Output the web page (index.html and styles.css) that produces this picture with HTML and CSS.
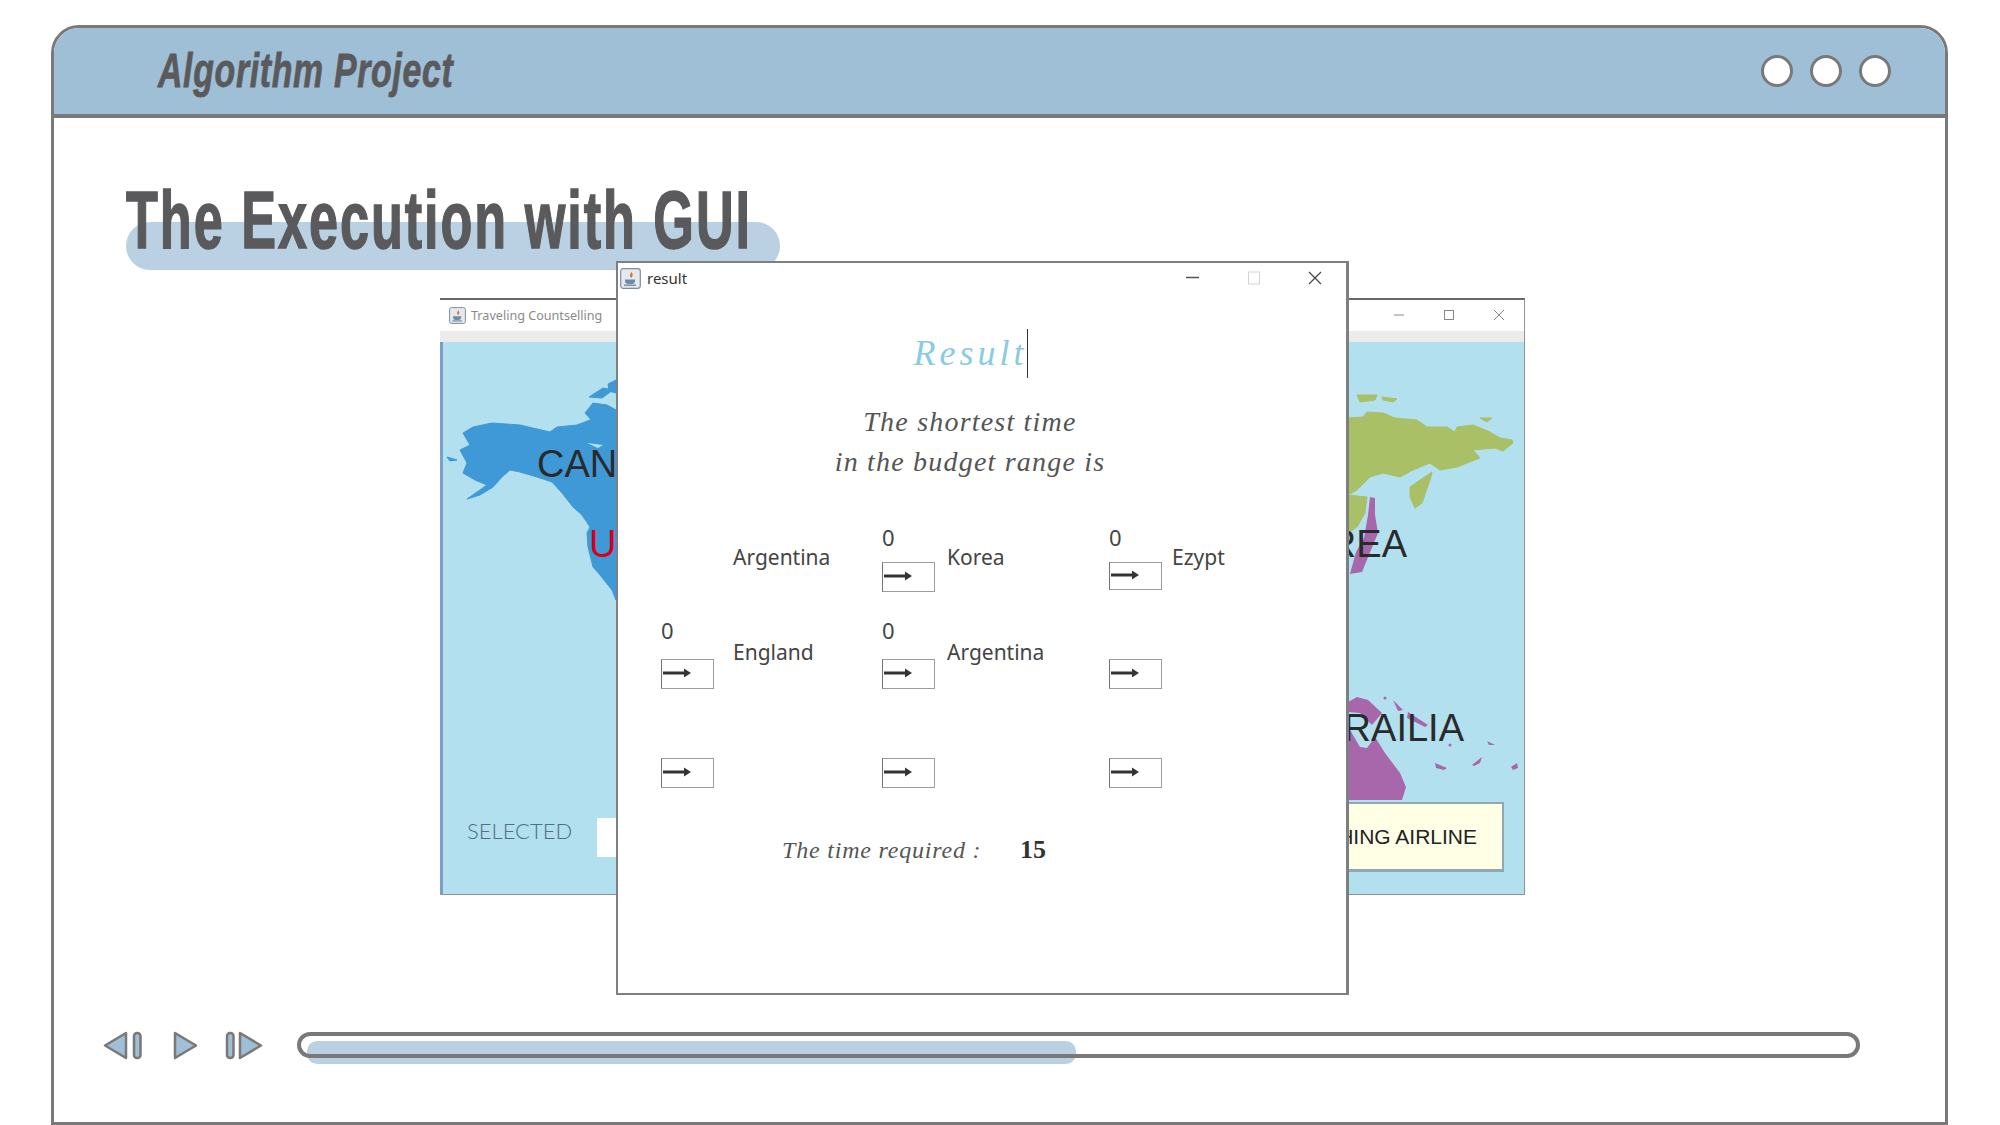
FILE: index.html
```html
<!DOCTYPE html>
<html lang="en">
<head>
  <meta charset="UTF-8" />
  <title>Algorithm Project</title>
  <link rel="stylesheet" href="styles.css">
</head>
<body>
  <svg class="defs" width="0" height="0">
    <symbol id="java" viewBox="0 0 21 21">
      <rect x="0.7" y="0.7" width="19.6" height="19.6" rx="2.5" fill="#e4e9ef" stroke="#7f8c99" stroke-width="1.2"/>
      <path d="M11 3c1.5 2-2 3-.8 5.500 .3 .8 1 1.200 1.500 1.500-.3-1.500 2-2.500 .6-4.500C12 4.500 11.500 4 11 3z" fill="#d9742b"/>
      <path d="M5 11.500h10v1.500c0 2-1.500 3-3 3H8c-1.500 0-3-1-3-3z" fill="#6f8ba5"/>
      <rect x="4" y="16.500" width="12" height="1.400" fill="#6f8ba5"/>
    </symbol>
    <symbol id="arrow" viewBox="0 0 30 12">
      <path d="M0 6h23" stroke="#333" stroke-width="3" fill="none"/>
      <path d="M21 1.500 28 6l-7 4.500z" fill="#333"/>
    </symbol>
  </svg>

  <div class="frame">
    <header class="frame-head">
      <div class="frame-title">Algorithm Project</div>
      <div class="dots">
        <span class="dot"></span>
        <span class="dot"></span>
        <span class="dot"></span>
      </div>
    </header>

    <main class="frame-body">
      <h1 class="slide-title"><span>The Execution with GUI</span></h1>
    </main>

    <footer class="player">
      <div class="player-btns">
        <svg class="icon-prev" width="60" height="31" viewBox="0 0 60 31">
          <path d="M2 15.500 23 3v25z" class="shape"/>
          <rect x="31" y="3" width="6.500" height="25" rx="3" class="shape"/>
        </svg>
        <svg class="icon-play" width="26" height="31" viewBox="0 0 26 31">
          <path d="M2 3l21 12.500L2 28z" class="shape"/>
        </svg>
        <svg class="icon-next" width="40" height="31" viewBox="0 0 40 31">
          <rect x="2" y="3" width="6.500" height="25" rx="3" class="shape"/>
          <path d="M15 3l21 12.500L15 28z" class="shape"/>
        </svg>
      </div>
      <div class="track">
        <div class="track-fill"></div>
        <div class="track-line"></div>
      </div>
    </footer>
  </div>

  <div class="desktop">
    <section class="back-window">
      <div class="back-bar">
        <svg class="java" width="17" height="17"><use href="#java"/></svg>
        <span class="back-name">Traveling Countselling</span>
        <div class="back-ctrls">
          <svg width="12" height="12" viewBox="0 0 12 12"><path d="M1 6h10" stroke="#888"/></svg>
          <svg width="12" height="12" viewBox="0 0 12 12"><rect x="1.500" y="1.500" width="9" height="9" fill="none" stroke="#888"/></svg>
          <svg width="12" height="12" viewBox="0 0 12 12"><path d="M1 1l10 10M11 1 1 11" stroke="#888"/></svg>
        </div>
      </div>
      <div class="back-band"></div>
      <div class="map">
        <svg class="map-art" width="1081" height="552" viewBox="443 342 1081 552">
          <g class="land-blue">
            <path d="M463 433 473 427 492 423 520 425 550 432 557 427 577 425 590 420 616 417V600L612 590 600 575 593 567 588 547 587 533 590 527 582 515 573 507 562 493 552 482 537 477 520 472 510 470 502 477 493 487 480 495 467 499 477 492 487 485 475 480 463 473 467 463 460 450 470 445z"/>
            <path d="M589 397 603 388 613 390 602 398z"/>
            <path d="M585 413 593 403 607 405 616 410V431L603 423 593 422z"/>
            <path d="M447 457 457 460 450 461z"/>
            <path d="M608 384 616 380V393L609 391z"/>
          </g>
          <path d="M587 443 603 445 598 448z" fill="#b2e0ef"/>
          <g class="land-green">
            <path d="M1348 418 1363 417 1367 412 1383 413 1395 418 1417 420 1427 427 1447 427 1455 432 1457 427 1473 425 1490 432 1500 438 1512 440 1513 443 1503 451 1495 448 1473 450 1480 458 1457 467 1440 470 1430 463 1413 470 1400 477 1383 473 1370 477 1357 490 1348 495z"/>
            <path d="M1410 487 1420 480 1432 472 1430 480 1422 503 1415 508 1410 497z"/>
            <path d="M1348 495 1367 497 1365 513 1357 527 1348 533z"/>
            <path d="M1357 395 1377 395 1375 400 1360 402z"/>
            <path d="M1382 397 1397 399 1393 402 1383 400z"/>
            <path d="M1480 418 1492 418 1487 422z"/>
          </g>
          <g class="land-purple">
            <path d="M1370 497 1375 498 1375 515 1378 533 1371 550 1362 572 1350 574 1356 552 1364 538 1368 515z"/>
            <path d="M1348 730 1350 730 1360 747 1367 748 1375 737 1385 753 1400 773 1406 787 1402 800H1348z"/>
            <path d="M1348 702 1357 697 1368 700 1382 713 1372 725 1360 713 1348 712z"/>
            <path d="M1393 700 1403 710 1398 711z"/>
            <path d="M1408 712 1428 725 1425 727 1407 718z"/>
            <path d="M1435 763 1447 768 1444 770 1436 768z"/>
            <path d="M1472 765 1482 757 1480 763 1474 766z"/>
            <path d="M1511 767 1517 763 1518 768 1513 770z"/>
            <path d="M1487 741 1495 745 1489 745z"/>
            <circle cx="1450" cy="745" r="1.500"/>
            <circle cx="1385" cy="698" r="1.500"/>
          </g>
          <text class="map-label" x="537" y="477">CAN</text>
          <text class="map-label map-red" x="589" y="557">U</text>
          <text class="map-label" x="1407" y="557" text-anchor="end">REA</text>
          <text class="map-label" x="1464" y="741" text-anchor="end">RAILIA</text>
        </svg>
        <span class="selected">SELECTED</span>
        <div class="selected-box"></div>
        <div class="airline">HING AIRLINE</div>
      </div>
    </section>

    <section class="front-window">
      <div class="front-bar">
        <svg width="21" height="21"><use href="#java"/></svg>
        <span class="front-name">result</span>
        <div class="front-ctrls">
          <svg width="14" height="14" viewBox="0 0 14 14"><path d="M0 6.500h13" stroke="#555" stroke-width="1.500"/></svg>
          <svg width="14" height="14" viewBox="0 0 14 14"><rect x="1.500" y="1" width="11" height="12" fill="none" stroke="#d4d4d4"/></svg>
          <svg width="14" height="14" viewBox="0 0 14 14"><path d="M1 1l12 12M13 1 1 13" stroke="#444" stroke-width="1.200"/></svg>
        </div>
      </div>

      <div class="front-content">
        <div class="result-head">Result</div>
        <p class="result-sub">The shortest time<br>in the budget range is</p>

        <div class="route">
          <div class="cell">
            <div class="stack"></div>
            <span class="place place-a">Argentina</span>
          </div>
          <div class="cell">
            <div class="stack">
              <span class="count count-a">0</span>
              <div class="arrow-box"><svg width="30" height="12"><use href="#arrow"/></svg></div>
            </div>
            <span class="place place-a place-b">Korea</span>
          </div>
          <div class="cell">
            <div class="stack stack-up">
              <span class="count count-a">0</span>
              <div class="arrow-box"><svg width="30" height="12"><use href="#arrow"/></svg></div>
            </div>
            <span class="place place-a place-c">Ezypt</span>
          </div>

          <div class="cell">
            <div class="stack">
              <span class="count">0</span>
              <div class="arrow-box"><svg width="30" height="12"><use href="#arrow"/></svg></div>
            </div>
            <span class="place place-d">England</span>
          </div>
          <div class="cell">
            <div class="stack">
              <span class="count">0</span>
              <div class="arrow-box"><svg width="30" height="12"><use href="#arrow"/></svg></div>
            </div>
            <span class="place place-d place-b">Argentina</span>
          </div>
          <div class="cell">
            <div class="stack">
              <div class="arrow-box"><svg width="30" height="12"><use href="#arrow"/></svg></div>
            </div>
          </div>

          <div class="cell">
            <div class="stack">
              <div class="arrow-box"><svg width="30" height="12"><use href="#arrow"/></svg></div>
            </div>
          </div>
          <div class="cell">
            <div class="stack">
              <div class="arrow-box"><svg width="30" height="12"><use href="#arrow"/></svg></div>
            </div>
          </div>
          <div class="cell">
            <div class="stack">
              <div class="arrow-box"><svg width="30" height="12"><use href="#arrow"/></svg></div>
            </div>
          </div>
        </div>

        <div class="time-row">
          <span class="time-label">The time required :</span>
          <span class="time-value">15</span>
        </div>
      </div>
    </section>
  </div>
</body>
</html>
```

FILE: styles.css
```css
body {
  margin: 0;
  width: 2000px;
  height: 1125px;
  overflow: hidden;
  position: relative;
  background: #fff;
  font-family: "Noto Sans", sans-serif;
  color: #444;
}

.defs {
  position: absolute;
}

/* big slide frame */
.frame {
  box-sizing: border-box;
  margin: 25px 0 0 51px;
  width: 1897px;
  height: 1100px;
  border: 3px solid #7a7879;
  border-radius: 28px 28px 0 0;
  display: flex;
  flex-direction: column;
}

.frame-head {
  box-sizing: border-box;
  height: 90px;
  flex: none;
  background: #9ebfd6;
  border-bottom: 4px solid #7a7879;
  border-radius: 25px 25px 0 0;
  display: flex;
  align-items: center;
  justify-content: space-between;
  padding: 0 54px 0 104px;
}

.frame-title {
  font-family: "Liberation Sans", sans-serif;
  font-weight: bold;
  font-style: italic;
  font-size: 49px;
  letter-spacing: 1px;
  color: #5a595b;
  -webkit-text-stroke: 0.8px #5a595b;
  transform: scaleX(0.69) translateY(-1px);
  transform-origin: left center;
  white-space: nowrap;
}

.dots {
  display: flex;
  gap: 17px;
}

.dot {
  box-sizing: border-box;
  width: 32px;
  height: 32px;
  border-radius: 50%;
  background: #fff;
  border: 3px solid #7a7879;
}

.frame-body {
  flex: 1;
  padding: 49px 0 0 72px;
}

.slide-title {
  margin: 0;
  width: 654px;
  height: 100px;
  position: relative;
  font-family: "Liberation Sans", sans-serif;
  font-weight: bold;
  font-size: 81px;
  line-height: 92px;
  color: #5a595b;
  white-space: nowrap;
}

.slide-title::before {
  content: "";
  position: absolute;
  left: 0;
  top: 55px;
  width: 654px;
  height: 48px;
  border-radius: 24px;
  background: #b9d1e2;
}

.slide-title span {
  position: relative;
  display: inline-block;
  top: 7px;
  letter-spacing: 3px;
  -webkit-text-stroke: 1.500px #5a595b;
  transform: scaleX(0.645);
  transform-origin: left center;
}

/* player controls */
.player {
  flex: none;
  display: flex;
  align-items: flex-start;
  padding: 0 0 61px 49px;
}

.player-btns {
  display: flex;
  align-items: center;
  width: 194px;
}

.player-btns svg {
  display: block;
  flex: none;
}

.icon-play {
  margin: 0 0 0 10px;
}

.icon-next {
  margin-left: 26px;
}

.shape {
  fill: #9ebfd6;
  stroke: #7a7879;
  stroke-width: 2.500;
  stroke-linejoin: round;
}

.track {
  position: relative;
  width: 1563px;
  height: 31px;
}

.track-line {
  position: absolute;
  left: 0;
  top: 2px;
  box-sizing: border-box;
  width: 1563px;
  height: 26px;
  border: 4px solid #7a7879;
  border-radius: 13px;
}

.track-fill {
  position: absolute;
  left: 10px;
  top: 11px;
  width: 769px;
  height: 23px;
  border-radius: 10px;
  background: #b9d1e2;
}

/* windows on top of the slide */
.desktop {
  position: absolute;
  left: 0;
  top: 0;
}

.back-window {
  position: absolute;
  left: 440px;
  top: 298px;
  box-sizing: border-box;
  width: 1085px;
  height: 597px;
  border-top: 2px solid #666;
  border-right: 1px solid #8d9599;
  border-bottom: 1px solid #8d9599;
  background: #fff;
  display: flex;
  flex-direction: column;
}

.back-bar {
  height: 30px;
  flex: none;
  display: flex;
  align-items: center;
  padding: 0 0 1px 9px;
  color: #8a8a8a;
}

.java {
  margin-right: 5px;
}

.back-name {
  font-size: 12.600px;
}

.back-ctrls {
  margin-left: auto;
  margin-right: 19px;
  display: flex;
  gap: 38px;
}

.back-band {
  height: 11px;
  flex: none;
  background: #ececec;
}

.map {
  flex: 1;
  position: relative;
  background: #b2e0ef;
  box-shadow: inset 3px 0 #7b9fc8;
  overflow: hidden;
}

.map-art {
  position: absolute;
  left: 3px;
  top: 0;
}

.land-blue {
  fill: #3f99d6;
  stroke: #3f99d6;
  stroke-linejoin: round;
}

.land-green {
  fill: #a9c067;
  stroke: #a9c067;
  stroke-linejoin: round;
}

.land-purple {
  fill: #a967ab;
}

.map-label {
  font-family: "Liberation Sans", sans-serif;
  font-size: 38px;
  fill: #2a2a2a;
}

.map-red {
  fill: #d6001c;
}

.selected {
  position: absolute;
  left: 27px;
  top: 475px;
  font-family: Lato, sans-serif;
  font-weight: 300;
  font-size: 22px;
  color: #4f6f7e;
}

.selected-box {
  position: absolute;
  left: 157px;
  top: 476px;
  width: 60px;
  height: 39px;
  background: #fff;
}

.airline {
  position: absolute;
  left: 803px;
  top: 460px;
  box-sizing: border-box;
  width: 261px;
  height: 70px;
  border: 2px solid #93a7b2;
  border-bottom-width: 3px;
  background: #ffffe6;
  font-family: "Liberation Sans", sans-serif;
  font-size: 21px;
  color: #222;
  display: flex;
  align-items: center;
  justify-content: flex-end;
  padding-right: 25px;
}

.front-window {
  position: absolute;
  left: 616px;
  top: 261px;
  box-sizing: border-box;
  width: 733px;
  height: 734px;
  border: 2px solid #7d8083;
  border-right-width: 3px;
  background: #fff;
}

.front-bar {
  height: 30px;
  display: flex;
  align-items: center;
  padding-left: 2px;
}

.front-name {
  margin-left: 6px;
  font-size: 15px;
  color: #333;
}

.front-ctrls {
  margin-left: auto;
  margin-right: 24px;
  display: flex;
  gap: 47px;
}

.front-content {
  display: flex;
  flex-direction: column;
}

.result-head {
  align-self: center;
  margin: 36px 22px 0 0;
  height: 49px;
  line-height: 49px;
  border-right: 1px solid #333;
  font-family: "Liberation Serif", serif;
  font-style: italic;
  font-size: 36px;
  letter-spacing: 4px;
  color: #88cce4;
}

.result-sub {
  margin: 24px 24px 0 0;
  text-align: center;
  font-family: "Liberation Serif", serif;
  font-style: italic;
  font-size: 28px;
  line-height: 40px;
  letter-spacing: 1.200px;
  color: #555;
}

.route {
  margin: 43px 0 0 43px;
  display: grid;
  grid-template-columns: 221px 227px 1fr;
  grid-template-rows: 67px 97px 99px;
}

.cell {
  display: flex;
  align-items: flex-start;
}

.stack {
  width: 53px;
  height: 100%;
  display: flex;
  flex-direction: column;
  justify-content: flex-end;
  align-items: flex-start;
}

.stack-up {
  padding-bottom: 2px;
  box-sizing: border-box;
}

.count {
  font-size: 22px;
  line-height: 24px;
  margin-bottom: 17px;
}

.count-a {
  margin-bottom: 13px;
}

.arrow-box {
  box-sizing: border-box;
  width: 53px;
  height: 30px;
  border: 1.500px solid #9a9ea3;
  border-left-color: #6f7478;
  display: flex;
  align-items: center;
  padding-left: 1px;
  padding-bottom: 3px;
}

.arrow-box svg {
  display: block;
}

.place {
  font-size: 21px;
  line-height: 28px;
  color: #444;
  margin-left: 19px;
}

.place-a {
  margin-top: 18px;
}

.place-d {
  margin-top: 46px;
}

.place-b {
  margin-left: 12px;
}

.place-c {
  margin-left: 10px;
}

.time-row {
  margin: 47px 0 0 164px;
  display: flex;
  align-items: baseline;
}

.time-label {
  width: 238px;
  font-family: "Liberation Serif", serif;
  font-style: italic;
  font-size: 24px;
  letter-spacing: 0.800px;
  color: #555;
}

.time-value {
  font-family: "Liberation Serif", serif;
  font-weight: bold;
  font-size: 26px;
  color: #333;
}
```
